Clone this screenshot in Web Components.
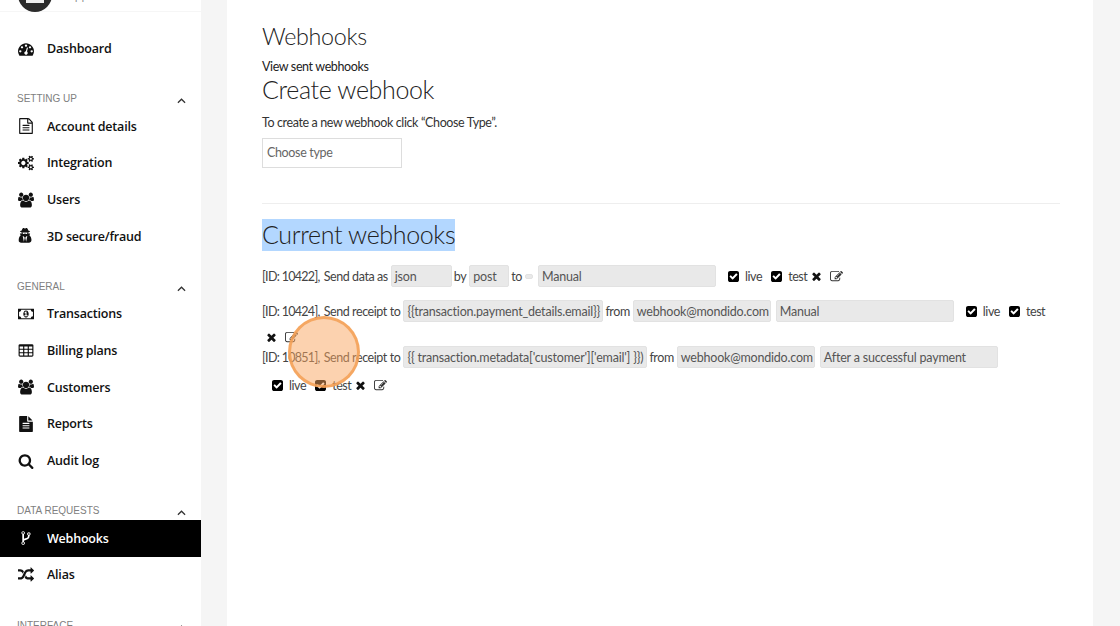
<!DOCTYPE html>
<html>
<head>
<meta charset="utf-8">
<title>Webhooks</title>
<style>
  html, body { margin: 0; height: 100%; background: #f5f5f5; }
</style>
</head>
<body>
<app-shell>
  <side-nav slot="nav">
    <nav-header>Support team</nav-header>
    <nav-item icon="dashboard" first>Dashboard</nav-item>
    <nav-section label="SETTING UP">
      <nav-item icon="file-o">Account details</nav-item>
      <nav-item icon="cogs">Integration</nav-item>
      <nav-item icon="users">Users</nav-item>
      <nav-item icon="secret">3D secure/fraud</nav-item>
    </nav-section>
    <nav-section label="GENERAL">
      <nav-item icon="money">Transactions</nav-item>
      <nav-item icon="table">Billing plans</nav-item>
      <nav-item icon="users">Customers</nav-item>
      <nav-item icon="file">Reports</nav-item>
      <nav-item icon="search">Audit log</nav-item>
    </nav-section>
    <nav-section label="DATA REQUESTS">
      <nav-item icon="fork" active>Webhooks</nav-item>
      <nav-item icon="random">Alias</nav-item>
    </nav-section>
    <nav-section label="INTERFACE"></nav-section>
  </side-nav>
  <webhooks-page>
    <webhook-row rowgap="13">
      <span>[ID: 10422],</span><span>Send data as</span>
      <field-box w="61">json</field-box><span>by</span>
      <field-box w="40">post</field-box><span>to</span>
      <field-box w="8" tiny></field-box>
      <field-box w="178">Manual</field-box>
    </webhook-row>
    <webhook-row rowgap="1">
      <span>[ID: 10424],</span><span>Send receipt to</span>
      <field-box w="200">{{transaction.payment_details.email}}</field-box><span>from</span>
      <field-box w="138">webhook@mondido.com</field-box>
      <field-box w="178">Manual</field-box>
    </webhook-row>
    <webhook-row>
      <span>[ID: 10851],</span><span>Send receipt to</span>
      <field-box w="244">{{ transaction.metadata['customer']['email'] }})</field-box><span>from</span>
      <field-box w="138">webhook@mondido.com</field-box>
      <field-box w="178">After a successful payment</field-box>
    </webhook-row>
  </webhooks-page>
</app-shell>

<script>
/* Font Awesome 4 shapes, [viewBox, path] */
var ICONS = {
  dashboard: ['0 0 1792 1792', 'M384 1152q0-53-37.500-90.500t-90.500-37.500-90.500 37.500-37.500 90.500 37.500 90.500 90.500 37.500 90.500-37.500 37.500-90.500zm192-448q0-53-37.500-90.500t-90.500-37.500-90.500 37.500-37.500 90.500 37.500 90.500 90.500 37.500 90.500-37.500 37.500-90.500zm428 481l101-382q6-26-7.500-48.500t-38.500-29.500-48 6.500-30 39.500l-101 382q-60 5-107 43.500t-63 98.500q-20 77 20 146t117 89 146-20 89-117q16-60-6-117t-72-91zm660-33q0-53-37.500-90.500t-90.500-37.500-90.500 37.500-37.500 90.500 37.500 90.500 90.500 37.500 90.500-37.500 37.500-90.500zm-640-640q0-53-37.500-90.500t-90.500-37.500-90.500 37.500-37.500 90.500 37.500 90.500 90.500 37.500 90.500-37.500 37.500-90.500zm448 192q0-53-37.500-90.500t-90.500-37.500-90.500 37.500-37.500 90.500 37.500 90.500 90.500 37.500 90.500-37.500 37.500-90.500zm320 448q0 261-141 483-19 29-54 29h-1402q-35 0-54-29-141-221-141-483 0-182 71-348t191-286 286-191 348-71 348 71 286 191 191 286 71 348z'],
  'file-o': ['0 0 1792 1792', 'M1596 380q28 28 48 76t20 88v1152q0 40-28 68t-68 28h-1344q-40 0-68-28t-28-68v-1600q0-40 28-68t68-28h896q40 0 88 20t76 48zm-444-244v376h376q-10-29-22-41l-313-313q-12-12-41-22zm384 1528v-1024h-416q-40 0-68-28t-28-68v-416h-768v1536h1280zm-1024-864q0-14 9-23t23-9h704q14 0 23 9t9 23v64q0 14-9 23t-23 9h-704q-14 0-23-9t-9-23v-64zm736 224q14 0 23 9t9 23v64q0 14-9 23t-23 9h-704q-14 0-23-9t-9-23v-64q0-14 9-23t23-9h704zm0 256q14 0 23 9t9 23v64q0 14-9 23t-23 9h-704q-14 0-23-9t-9-23v-64q0-14 9-23t23-9h704z'],
  cogs: ['0 0 1920 1792', 'M896 896q0-106-75-181t-181-75-181 75-75 181 75 181 181 75 181-75 75-181zm768 512q0-52-38-90t-90-38-90 38-38 90q0 53 37.500 90.500t90.500 37.500 90.500-37.500 37.500-90.500zm0-1024q0-52-38-90t-90-38-90 38-38 90q0 53 37.500 90.500t90.500 37.500 90.500-37.500 37.500-90.500zm-384 421v185q0 10-7 19.500t-16 10.500l-155 24q-11 35-32 76 34 48 90 115 7 11 7 20 0 12-7 19-23 30-82.500 89.500t-78.500 59.500q-11 0-21-7l-115-90q-37 19-77 31-11 108-23 155-7 24-30 24h-186q-11 0-20-7.500t-10-17.500l-23-153q-34-10-75-31l-118 89q-7 7-20 7-11 0-21-8-144-133-144-160 0-9 7-19 10-14 41-53t47-61q-23-44-35-82l-152-24q-10-1-17-9.500t-7-19.500v-185q0-10 7-19.500t16-10.500l155-24q11-35 32-76-34-48-90-115-7-11-7-20 0-12 7-20 22-30 82-89t79-59q11 0 21 7l115 90q34-18 77-32 11-108 23-154 7-24 30-24h186q11 0 20 7.500t10 17.500l23 153q34 10 75 31l118-89q8-7 20-7 11 0 21 8 144 133 144 160 0 8-7 19-12 16-42 54t-45 60q23 48 34 82l152 23q10 2 17 10.500t7 19.500zm640 533v140q0 16-149 31-12 27-30 52 51 113 51 138 0 4-4 7-122 71-124 71-8 0-46-47t-52-68q-20 2-30 2t-30-2q-14 21-52 68t-46 47q-2 0-124-71-4-3-4-7 0-25 51-138-18-25-30-52-149-15-149-31v-140q0-16 149-31 13-29 30-52-51-113-51-138 0-4 4-7 4-2 35-20t59-34 30-16q8 0 46 46.500t52 67.500q20-2 30-2t30 2q51-71 92-112l6-2q4 0 124 70 4 3 4 7 0 25-51 138 17 23 30 52 149 15 149 31zm0-1024v140q0 16-149 31-12 27-30 52 51 113 51 138 0 4-4 7-122 71-124 71-8 0-46-47t-52-68q-20 2-30 2t-30-2q-14 21-52 68t-46 47q-2 0-124-71-4-3-4-7 0-25 51-138-18-25-30-52-149-15-149-31v-140q0-16 149-31 13-29 30-52-51-113-51-138 0-4 4-7 4-2 35-20t59-34 30-16q8 0 46 46.500t52 67.500q20-2 30-2t30 2q51-71 92-112l6-2q4 0 124 70 4 3 4 7 0 25-51 138 17 23 30 52 149 15 149 31z'],
  users: ['0 0 1920 1792', 'M593 896q-162 5-265 128h-134q-82 0-138-40.500t-56-118.500q0-353 124-353 6 0 43.500 21t97.500 42.500 119 21.500q67 0 133-23-5 37-5 66 0 139 81 256zm1071 637q0 120-73 189.500t-194 69.500h-874q-121 0-194-69.500t-73-189.500q0-53 3.500-103.500t14-109 26.500-108.500 43-97.500 62-81 85.500-53.500 111.500-20q10 0 43 21.500t73 48 107 48 135 21.500 135-21.500 107-48 73-48 43-21.500q61 0 111.500 20t85.500 53.500 62 81 43 97.500 26.500 108.500 14 109 3.500 103.500zm-1024-1277q0 106-75 181t-181 75-181-75-75-181 75-181 181-75 181 75 75 181zm704 384q0 159-112.500 271.500t-271.500 112.500-271.500-112.500-112.500-271.500 112.500-271.500 271.500-112.500 271.500 112.500 112.500 271.500zm576 225q0 78-56 118.500t-138 40.500h-134q-103-123-265-128 81-117 81-256 0-29-5-66 66 23 133 23 59 0 119-21.500t97.500-42.500 43.500-21q124 0 124 353zm-128-609q0 106-75 181t-181 75-181-75-75-181 75-181 181-75 181 75 75 181z'],
  secret: ['0 0 1792 1792', 'M657 1536l96-448-96-128-128-64zm254 0l128-640-128 64-96 128zm161-1024q-2-4-4-6-10-8-96-8-70 0-167 19-7 2-21 2t-21-2q-97-19-167-19-86 0-96 8-2 2-4 6 2 18 4 27 2 3 7.500 6.500t7.500 10.500q2 4 7.500 20.500t7 20.500 7.500 17 8.500 17 9 14 12 13.500 14 9.500 17.500 8 20.500 4 24.500 2q36 0 59-12.500t32.500-30 14.500-34.500 11.500-29.500 17.500-12.500h12q11 0 17.500 12.500t11.500 29.500 14.500 34.500 32.500 30 59 12.500q13 0 24.500-2t20.500-4 17.500-8 14-9.500 12-13.500 9-14 8.500-17 7.500-17 7-20.500 7.500-20.500q2-7 7.500-10.500t7.500-6.500q2-9 4-27zm416 879q0 121-73 190t-194 69h-874q-121 0-194-69t-73-190q0-61 4.500-118t19-125.500 37.500-123.500 63.500-103.500 93.500-74.500l-90-220h214q-22-64-22-128 0-12 2-32-194-40-194-96 0-57 210-99 17-62 51.500-134t70.500-114q32-37 76-37 30 0 84 31t84 31 84-31 84-31q44 0 76 36 36 42 70.500 114t51.500 134q210 42 210 99 0 56-194 96 7 81-20 160h214l-82 225q63 33 110.500 96.500t74 142.500 38 159.500 12.500 165.500z'],
  money: ['0 0 1920 1792', 'M768 1152h384v-96h-128v-448h-114l-148 137 77 80q42-37 55-57h2v288h-128v96zm512-256q0 70-21 142t-59.500 134-101.500 101-138 39-138-39-101.500-101-59.500-134-21-142 21-142 59.500-134 101.500-101 138-39 138 39 101.500 101 59.500 134 21 142zm512 256v-512q-106 0-181-75t-75-181h-1152q0 106-75 181t-181 75v512q106 0 181 75t75 181h1152q0-106 75-181t181-75zm128-832v1152q0 26-19 45t-45 19h-1792q-26 0-45-19t-19-45v-1152q0-26 19-45t45-19h1792q26 0 45 19t19 45z'],
  table: ['0 0 1792 1792', 'M576 1376v-192q0-14-9-23t-23-9h-320q-14 0-23 9t-9 23v192q0 14 9 23t23 9h320q14 0 23-9t9-23zm0-384v-192q0-14-9-23t-23-9h-320q-14 0-23 9t-9 23v192q0 14 9 23t23 9h320q14 0 23-9t9-23zm512 384v-192q0-14-9-23t-23-9h-320q-14 0-23 9t-9 23v192q0 14 9 23t23 9h320q14 0 23-9t9-23zm-512-768v-192q0-14-9-23t-23-9h-320q-14 0-23 9t-9 23v192q0 14 9 23t23 9h320q14 0 23-9t9-23zm512 384v-192q0-14-9-23t-23-9h-320q-14 0-23 9t-9 23v192q0 14 9 23t23 9h320q14 0 23-9t9-23zm512 384v-192q0-14-9-23t-23-9h-320q-14 0-23 9t-9 23v192q0 14 9 23t23 9h320q14 0 23-9t9-23zm-512-768v-192q0-14-9-23t-23-9h-320q-14 0-23 9t-9 23v192q0 14 9 23t23 9h320q14 0 23-9t9-23zm512 384v-192q0-14-9-23t-23-9h-320q-14 0-23 9t-9 23v192q0 14 9 23t23 9h320q14 0 23-9t9-23zm0-384v-192q0-14-9-23t-23-9h-320q-14 0-23 9t-9 23v192q0 14 9 23t23 9h320q14 0 23-9t9-23zm128-320v1088q0 66-47 113t-113 47h-1344q-66 0-113-47t-47-113v-1088q0-66 47-113t113-47h1344q66 0 113 47t47 113z'],
  file: ['0 0 1792 1792', 'M1596 476q14 14 28 36h-472v-472q22 14 36 28zm-476 164h544v1056q0 40-28 68t-68 28h-1344q-40 0-68-28t-28-68v-1600q0-40 28-68t68-28h800v544q0 40 28 68t68 28zm160 736v-64q0-14-9-23t-23-9h-704q-14 0-23 9t-9 23v64q0 14 9 23t23 9h704q14 0 23-9t9-23zm0-256v-64q0-14-9-23t-23-9h-704q-14 0-23 9t-9 23v64q0 14 9 23t23 9h704q14 0 23-9t9-23zm0-256v-64q0-14-9-23t-23-9h-704q-14 0-23 9t-9 23v64q0 14 9 23t23 9h704q14 0 23-9t9-23z'],
  search: ['0 0 1792 1792', 'M1216 832q0-185-131.500-316.500t-316.500-131.500-316.500 131.500-131.500 316.500 131.500 316.500 316.500 131.500 316.500-131.500 131.500-316.500zm512 832q0 52-38 90t-90 38q-54 0-90-38l-343-342q-179 124-399 124-143 0-273.500-55.500t-225-150-150-225-55.500-273.500 55.500-273.500 150-225 225-150 273.500-55.500 273.500 55.500 225 150 150 225 55.500 273.500q0 220-124 399l343 343q37 37 37 90z'],
  fork: ['0 0 1792 1792', 'M672 1472q0-40-28-68t-68-28-68 28-28 68 28 68 68 28 68-28 28-68zm0-1152q0-40-28-68t-68-28-68 28-28 68 28 68 68 28 68-28 28-68zm640 128q0-40-28-68t-68-28-68 28-28 68 28 68 68 28 68-28 28-68zm96 0q0 52-26 96.500t-70 69.500q-2 287-226 414-67 38-203 81-128 40-169.500 71t-41.500 100v26q44 25 70 69.500t26 96.500q0 80-56 136t-136 56-136-56-56-136q0-52 26-96.500t70-69.500v-820q-44-25-70-69.500t-26-96.500q0-80 56-136t136-56 136 56 56 136q0 52-26 96.500t-70 69.500v497q54-26 154-57 55-17 87.500-29.500t70.500-31 59-39.500 40.500-51 28-69.500 8.500-91.500q-44-25-70-69.500t-26-96.500q0-80 56-136t136-56 136 56 56 136z'],
  random: ['0 0 1792 1792', 'M666 481q-60 92-137 273-22-45-37-72.500t-40.500-63.500-51-56.500-63-35-81.500-14.500h-224q-14 0-23-9t-9-23v-192q0-14 9-23t23-9h224q250 0 410 225zm1126 799q0 14-9 23l-320 320q-9 9-23 9-13 0-22.500-9.500t-9.500-22.500v-192q-32 0-85 .5t-81 1-73-1-71-5-64-10.500-63-18.500-58-28.500-59-40-55-53.500-56-69.500q59-93 136-273 22 45 37 72.500t40.500 63.500 51 56.500 63 35 81.500 14.500h256v-192q0-14 9-23t23-9q12 0 24 10l319 319q9 9 9 23zm0-896q0 14-9 23l-320 320q-9 9-23 9-13 0-22.500-9.500t-9.500-22.500v-192h-256q-48 0-87 15t-69 45-51 61.500-45 77.500q-32 62-78 171-29 66-49.500 111t-54 105-64 100-74 83-90 68.500-106.500 42-128 16.500h-224q-14 0-23-9t-9-23v-192q0-14 9-23t23-9h224q48 0 87-15t69-45 51-61.500 45-77.500q32-62 78-171 29-66 49.500-111t54-105 64-100 74-83 90-68.500 106.500-42 128-16.500h256v-192q0-14 9-23t23-9q12 0 24 10l319 319q9 9 9 23z'],
  times: ['288 288 1216 1280', 'M1490 1322q0 40-28 68l-136 136q-28 28-68 28t-68-28l-294-294-294 294q-28 28-68 28t-68-28l-136-136q-28-28-28-68t28-68l294-294-294-294q-28-28-28-68t28-68l136-136q28-28 68-28t68 28l294 294 294-294q28-28 68-28t68 28l136 136q28 28 28 68t-28 68l-294 294 294 294q28 28 28 68z'],
  edit: ['0 128 1792 1536', 'M888 1184l116-116-152-152-116 116v56h96v96h56zm440-720q-16-16-33 1l-350 350q-17 17-1 33t33-1l350-350q17-17 1-33zm80 594v190q0 119-84.500 203.500t-203.500 84.500h-832q-119 0-203.500-84.500t-84.500-203.500v-832q0-119 84.500-203.500t203.500-84.500h832q63 0 117 25 15 7 18 23 3 17-9 29l-49 49q-14 14-32 8-23-6-45-6h-832q-66 0-113 47t-47 113v832q0 66 47 113t113 47h832q66 0 113-47t47-113v-126q0-13 9-22l64-64q15-15 35-7t20 29zm-96-738l288 288-672 672h-288v-288zm444 132l-92 92-288-288 92-92q28-28 68-28t68 28l152 152q28 28 28 68t-28 68z'],
  check: ['128 128 1536 1536', 'M813 1299l614-614q19-19 19-45t-19-45l-102-102q-19-19-45-19t-45 19l-467 467-211-211q-19-19-45-19t-45 19l-102 102q-19 19-19 45t19 45l358 358q19 19 45 19t45-19zm851-883v960q0 119-84.500 203.500t-203.500 84.500h-960q-119 0-203.500-84.500t-84.500-203.500v-960q0-119 84.500-203.500t203.500-84.500h960q119 0 203.500 84.500t84.500 203.500z']
}

function iconSvg(name, size, color) {
  var ic = ICONS[name]
  return `<svg width="${size}" height="${size}" viewBox="${ic[0]}" fill="${color}" aria-hidden="true"><path d="${ic[1]}"/></svg>`
}

var CHEVRON = `<svg width="9" height="6" viewBox="0 0 10 6" fill="none" stroke="#333" stroke-width="1.4"><path d="M1 5l4-4 4 4"/></svg>`

class AppShell extends HTMLElement {
  constructor() {
    super()
    this.attachShadow({ mode: 'open' })
    this.shadowRoot.innerHTML = `
      <style>
        :host { display: grid; grid-template-columns: 201px 1fr; height: 626px; overflow: hidden; }
      </style>
      <slot name="nav"></slot>
      <slot></slot>`
  }
}

class SideNav extends HTMLElement {
  constructor() {
    super()
    this.attachShadow({ mode: 'open' })
    this.shadowRoot.innerHTML = `
      <style>
        :host { display: block; background: #fff; margin-top: -38px; width: 201px; height: 680px;
          font-family: "Open Sans", sans-serif; }
      </style>
      <slot></slot>`
  }
}

class NavHeader extends HTMLElement {
  constructor() {
    super()
    this.attachShadow({ mode: 'open' })
    this.shadowRoot.innerHTML = `
      <style>
        :host { display: flex; align-items: flex-end; height: 50px; box-sizing: border-box;
          padding: 0 14px 9px 18px; border-bottom: 1px solid #f6f6f6; color: #888; font-size: 11px; }
        .avatar { width: 34px; height: 34px; border-radius: 50%; background: #2b2b2b; margin: 0 10px -10px 0;
          flex: none; position: relative; }
        .avatar::after { content: ""; position: absolute; left: 8px; right: 8px; top: 17px; height: 8px; background: #eee; }
        .name { flex: 1; line-height: 14px; }
        svg { transform: rotate(180deg); margin-bottom: 3px; }
      </style>
      <div class="avatar"></div>
      <div class="name"><slot></slot></div>${CHEVRON}`
  }
}

class NavSection extends HTMLElement {
  constructor() {
    super()
    this.attachShadow({ mode: 'open' })
    this.shadowRoot.innerHTML = `
      <style>
        :host { display: block; padding-top: 23px; }
        .label { display: flex; justify-content: space-between; align-items: center; height: 18px;
          padding: 0 15px 0 17px; font: 10px "Liberation Sans", sans-serif; color: #808080; }
        svg { margin-top: 5px; }
      </style>
      <div class="label"><span>${this.getAttribute('label')}</span>${CHEVRON}</div>
      <slot></slot>`
  }
}

class NavItem extends HTMLElement {
  constructor() {
    super()
    this.attachShadow({ mode: 'open' })
    var active = this.hasAttribute('active')
    var icon = this.getAttribute('icon')
    this.shadowRoot.innerHTML = `
      <style>
        :host { display: flex; align-items: center; height: 36.67px; padding-left: 18px; width: 201px; box-sizing: border-box;
          font-size: 12.5px; letter-spacing: -.2px; font-weight: 600; color: ${active ? '#fff' : '#111'}; background: ${active ? '#000' : 'transparent'}; }
        :host([first]) { margin-top: 18.3px; }
        .ic { width: 29px; flex: none; display: flex; }
      </style>
      <span class="ic">${iconSvg(icon, 16, active ? '#fff' : '#111')}</span>
      <slot></slot>`
  }
}

class WebhooksPage extends HTMLElement {
  constructor() {
    super()
    this.attachShadow({ mode: 'open' })
    this.shadowRoot.innerHTML = `
      <style>
        :host { display: block; margin-left: 26px; width: 866px; height: 626px; box-sizing: border-box; background: #fff;
          padding: 19px 33px 0 35px; color: #333; font-family: Lato, sans-serif; font-size: 12.5px; position: relative; }
        h2 { font-weight: 300; font-size: 23.3px; letter-spacing: -.3px; line-height: 34px; margin: 0; color: #222; }
        .big { font-size: 25px; letter-spacing: -.35px; }
        a { display: block; line-height: 20px; margin-top: 4px; color: #222; letter-spacing: -.38px; }
        .big.create { margin-top: -5px; }
        p { margin: 8px 0 6px; line-height: 18px; color: #333; letter-spacing: -.38px; }
        .select { width: 140px; height: 30px; box-sizing: border-box; border: 1px solid #ddd; padding: 0 0 1px 4px;
          display: flex; align-items: center; color: #666; letter-spacing: -.35px; }
        hr { border: 0; border-top: 1px solid #eee; margin: 35px 0 15px; }
        .current { line-height: 30px; }
        mark { background: #b3d7ff; color: #222; display: inline-block; padding-bottom: 2px; }
        .rows { margin-top: 14px; }
        .spot { position: absolute; left: 61px; top: 316px; width: 72px; height: 72px; box-sizing: border-box; border-radius: 50%;
          background: rgba(250, 165, 95, .5); border: 3px solid rgba(243, 160, 85, .85); }
      </style>
      <h2>Webhooks</h2>
      <a>View sent webhooks</a>
      <h2 class="big create">Create webhook</h2>
      <p>To create a new webhook click “Choose Type”.</p>
      <div class="select">Choose type</div>
      <hr>
      <h2 class="big current"><mark>Current webhooks</mark></h2>
      <div class="rows"><slot></slot></div>
      <div class="spot"></div>`
  }
}

class FieldBox extends HTMLElement {
  constructor() {
    super()
    this.attachShadow({ mode: 'open' })
    var tiny = this.hasAttribute('tiny')
    this.shadowRoot.innerHTML = `
      <style>
        :host { display: flex; align-items: center; box-sizing: border-box; flex: none;
          width: ${this.getAttribute('w')}px; height: ${tiny ? 5 : 22}px; margin: 0 2px 0 3px; letter-spacing: -.2px;
          background: #e9e9e9; border: 1px solid #e2e2e2; border-radius: 2px; padding-left: 3px; color: #555; white-space: nowrap; }
      </style>
      <slot></slot>`
  }
}

class WebhookRow extends HTMLElement {
  constructor() {
    super()
    this.attachShadow({ mode: 'open' })
    var check = (t) => `<span class="check">${iconSvg('check', 11, '#000')}<span>${t}</span></span>`
    this.shadowRoot.innerHTML = `
      <style>
        :host { display: flex; flex-wrap: wrap; align-items: center; row-gap: 7px; column-gap: 0;
          margin-bottom: ${this.getAttribute('rowgap') || 0}px; color: #444; letter-spacing: -.42px; }
        ::slotted(span) { white-space: nowrap; }
        ::slotted(span:first-child) { margin: 0 4px 0 0; letter-spacing: -.7px; }
        .checks { display: flex; align-items: center; height: 20px; margin-left: 10px; }
        .check { display: flex; align-items: center; gap: 6px; margin-right: 9px; }
        .check:last-child { margin-right: 0; }
        .actions { display: flex; align-items: center; height: 16px; gap: 9px; margin-left: 5px; }
      </style>
      <slot></slot>
      <div class="checks">${check('live')}${check('test')}</div>
      <div class="actions">${iconSvg('times', 9, '#111')}${iconSvg('edit', 13, '#333')}</div>`
  }
}

customElements.define('app-shell', AppShell)
customElements.define('side-nav', SideNav)
customElements.define('nav-header', NavHeader)
customElements.define('nav-section', NavSection)
customElements.define('nav-item', NavItem)
customElements.define('webhooks-page', WebhooksPage)
customElements.define('field-box', FieldBox)
customElements.define('webhook-row', WebhookRow)
</script>
</body>
</html>
